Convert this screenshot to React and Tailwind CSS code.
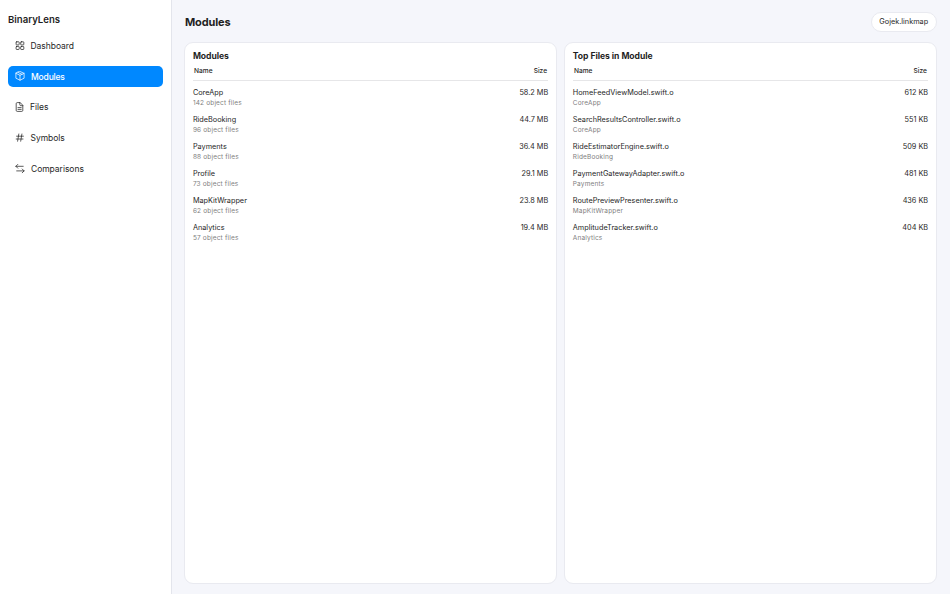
const modules = [
  { name: "CoreApp", detail: "142 object files", size: "58.2 MB" },
  { name: "RideBooking", detail: "96 object files", size: "44.7 MB" },
  { name: "Payments", detail: "88 object files", size: "36.4 MB" },
  { name: "Profile", detail: "73 object files", size: "29.1 MB" },
  { name: "MapKitWrapper", detail: "62 object files", size: "23.8 MB" },
  { name: "Analytics", detail: "57 object files", size: "19.4 MB" },
];

const files = [
  { name: "HomeFeedViewModel.swift.o", detail: "CoreApp", size: "612 KB" },
  { name: "SearchResultsController.swift.o", detail: "CoreApp", size: "551 KB" },
  { name: "RideEstimatorEngine.swift.o", detail: "RideBooking", size: "509 KB" },
  { name: "PaymentGatewayAdapter.swift.o", detail: "Payments", size: "481 KB" },
  { name: "RoutePreviewPresenter.swift.o", detail: "MapKitWrapper", size: "436 KB" },
  { name: "AmplitudeTracker.swift.o", detail: "Analytics", size: "404 KB" },
];

const Icon = ({ className, children }) => (
  <svg
    viewBox="0 0 10 10"
    className={`shrink-0 ${className}`}
    fill="none"
    stroke="currentColor"
    strokeWidth="0.75"
    strokeLinecap="round"
    strokeLinejoin="round"
  >
    {children}
  </svg>
);

const GridIcon = () => (
  <Icon className="w-[10px] h-[10px] mr-[5.5px]">
    <rect x="1.1" y="0.8" width="3.1" height="3.1" rx="0.6" />
    <rect x="5.7" y="0.8" width="3.1" height="3.1" rx="0.6" />
    <rect x="1.1" y="5.4" width="3.1" height="3.1" rx="0.6" />
    <rect x="5.7" y="5.4" width="3.1" height="3.1" rx="0.6" />
  </Icon>
);

const CubeIcon = () => (
  <Icon className="w-[10px] h-[10px] mr-[6px]">
    <path d="M5 0.5 9.1 2.3v4.9L5 9.2 0.9 7.2V2.3z" />
    <path d="M0.9 2.3 5 4.3 9.1 2.3M5 4.3v4.9M3 1.4l4 1.9" />
  </Icon>
);

const FileIcon = () => (
  <Icon className="w-[10px] h-[10px] mr-[5px]">
    <path d="M4.8 0.6H2.2c-.6 0-1 .4-1 1v6.8c0 .6.4 1 1 1h4.6c.6 0 1-.4 1-1V3.7z" />
    <path d="M4.8 0.6v2.1c0 .6.4 1 1 1h2M3 5.6h3.2M3 7.4h3.2" />
  </Icon>
);

const HashIcon = () => (
  <Icon className="w-[10px] h-[10px] mr-[5.5px]">
    <path d="M3.8 1 2.6 8.2M6.9 1 5.7 8.2M1.6 3.2h6.8M1.2 6H8" />
  </Icon>
);

const SwapIcon = () => (
  <Icon className="w-[10px] h-[10px] mr-[6px]">
    <path d="M8.2 2.3H0.9M2.8 0.4 0.9 2.3l1.9 1.9M1.7 6.9H9.1M7.2 5 9.1 6.9 7.2 8.8" />
  </Icon>
);

const navItems = [
  { label: "Dashboard", icon: <GridIcon /> },
  { label: "Modules", icon: <CubeIcon />, active: true },
  { label: "Files", icon: <FileIcon /> },
  { label: "Symbols", icon: <HashIcon /> },
  { label: "Comparisons", icon: <SwapIcon /> },
];

const Sidebar = () => (
  <aside className="w-[172px] shrink-0 bg-white border-r border-[#e3e5ec] px-2 pt-[12.5px]">
    <h1 className="text-[9.6px] leading-[14px] font-semibold">BinaryLens</h1>
    <nav className="mt-[8.5px] flex flex-col gap-[9.2px]">
      {navItems.map((item) => (
        <a
          key={item.label}
          className={`flex items-center w-[155px] h-[21.5px] pl-[7px] rounded-[5px] text-[8.5px] leading-[13px] ${
            item.active
              ? "bg-[#0088ff] text-white font-medium tracking-[-0.02em]"
              : "text-[#262626] tracking-[-0.005em]"
          }`}
        >
          {item.icon}
          <span className="pt-[1.4px]">{item.label}</span>
        </a>
      ))}
    </nav>
  </aside>
);

const Panel = ({ title, rows }) => (
  <section className="flex-1 min-w-0 bg-white border border-[#e9eaf0] rounded-[9px] px-[7.5px] pt-[7px]">
    <h3 className="text-[8.6px] leading-[12px] font-bold tracking-[-0.005em]">{title}</h3>
    <div className="flex justify-between mt-[2px] h-[16.5px] pt-[2px] px-[1.2px] border-b border-[#e6e6e8] text-[6.6px] leading-[10px] font-medium">
      <span>Name</span>
      <span>Size</span>
    </div>
    <ul className="mt-[7.3px]">
      {rows.map((row) => (
        <li key={row.name} className="flex justify-between h-[27.05px]">
          <div>
            <p className="text-[7.3px] leading-[10px]">{row.name}</p>
            <p className="text-[6.5px] leading-[10px] text-[#808080] tracking-[0.025em]">{row.detail}</p>
          </div>
          <span className="text-[7.3px] leading-[10px]">{row.size}</span>
        </li>
      ))}
    </ul>
  </section>
);

const App = () => {
  return (
    <div className="flex h-screen overflow-hidden bg-[#f5f6fb] text-[#1f1f1f] font-[Inter,sans-serif]">
      <Sidebar />
      <main className="flex-1 flex flex-col min-w-0 pl-[12.4px] pr-[13.4px] pt-3 pb-[10.5px]">
        <header className="flex items-center justify-between h-5">
          <h2 className="pl-[0.5px] text-[11px] leading-[16px] font-bold tracking-[-0.01em]">Modules</h2>
          <span className="flex items-center h-5 px-[7.5px] rounded-full bg-white border border-[#e9eaf0] text-[7.3px]">
            Gojek.linkmap
          </span>
        </header>
        <div className="flex flex-1 gap-[7.6px] mt-[10px]">
          <Panel title="Modules" rows={modules} />
          <Panel title="Top Files in Module" rows={files} />
        </div>
      </main>
    </div>
  );
};

export default App;
